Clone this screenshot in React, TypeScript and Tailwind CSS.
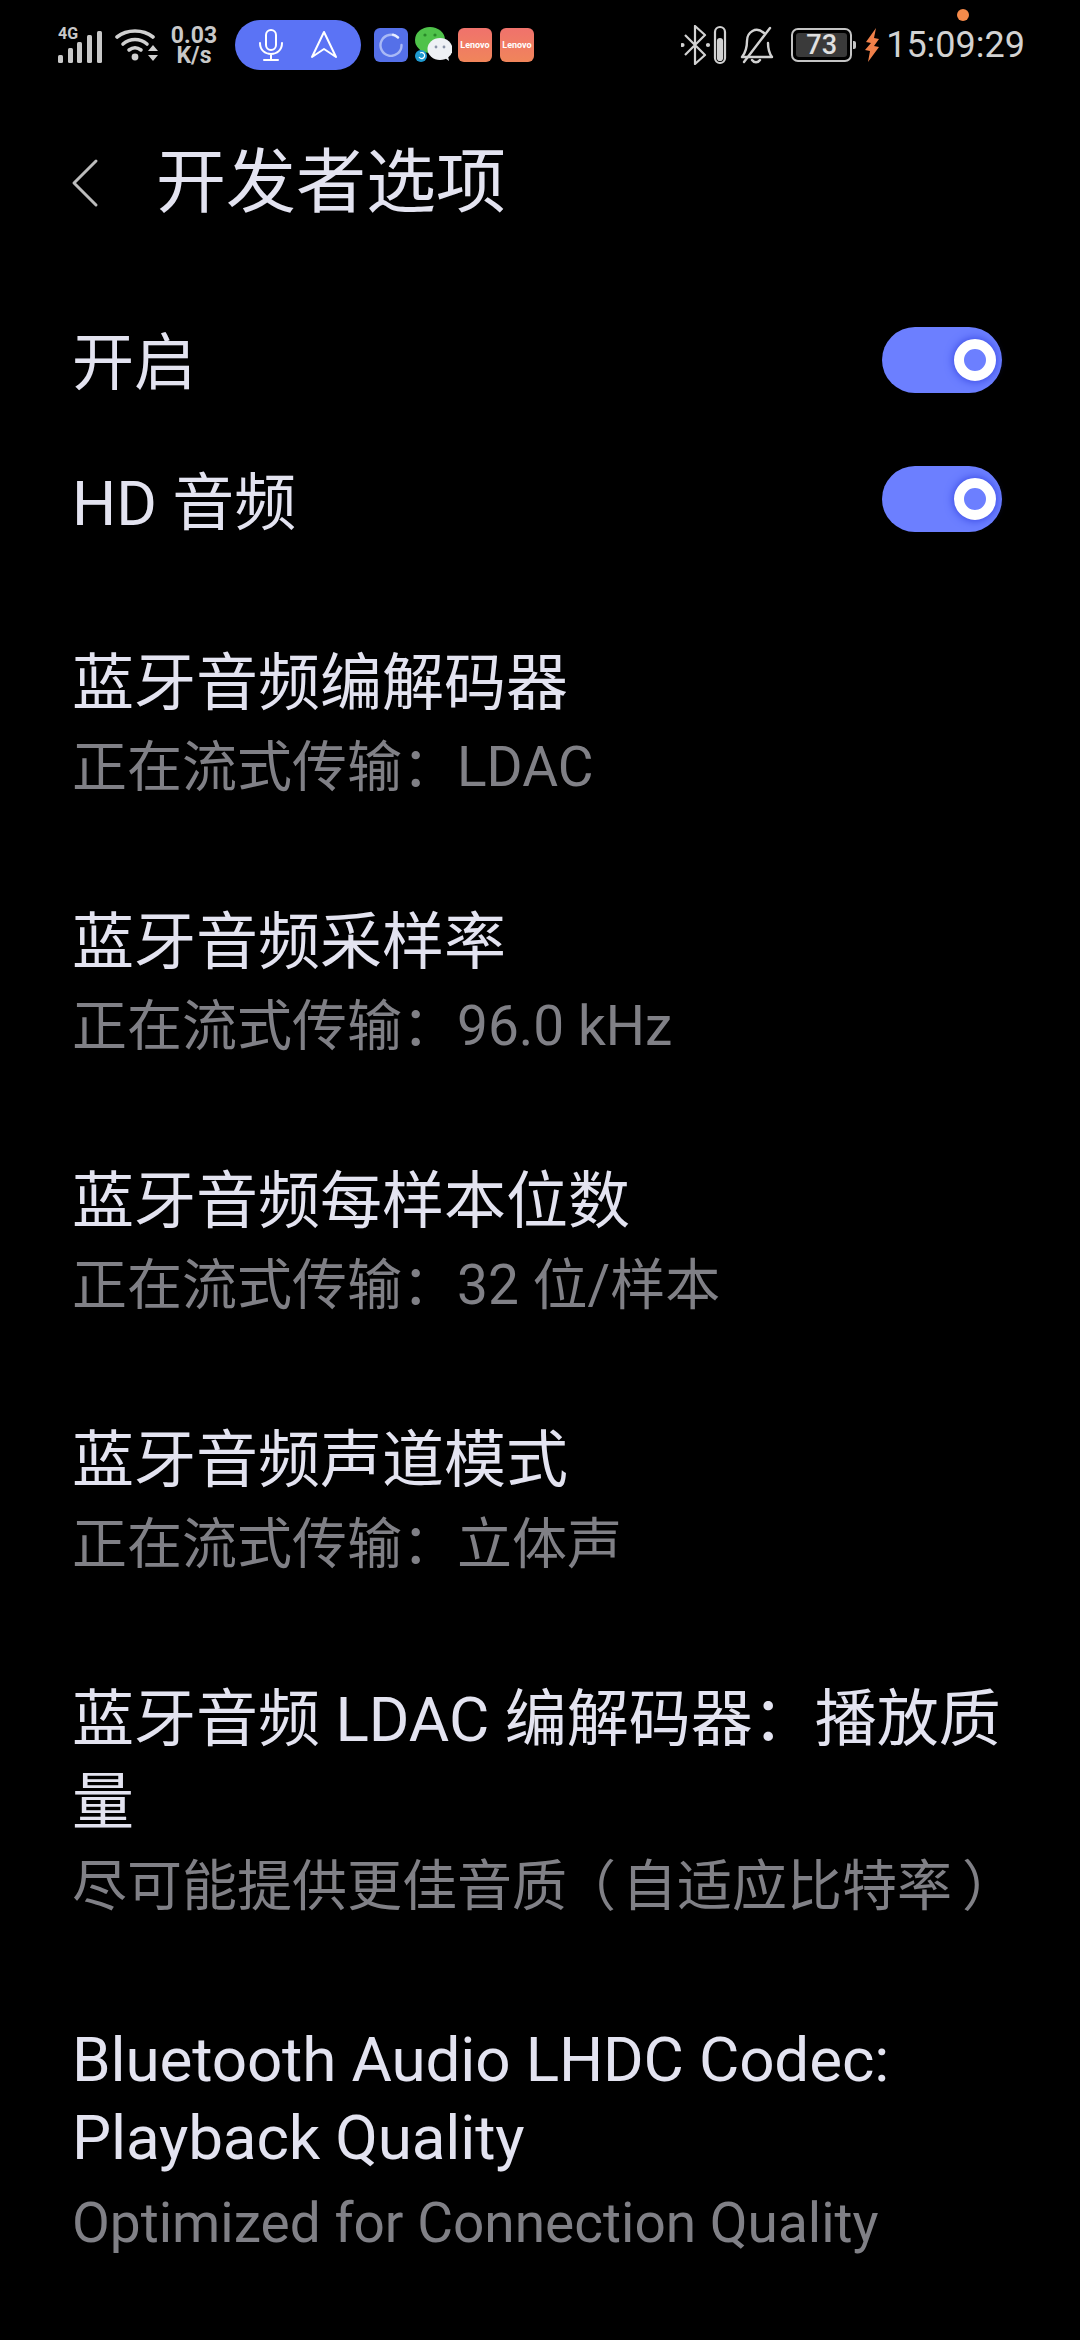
const font = { fontFamily: '"Roboto", "Noto Sans CJK SC", sans-serif' };

function Toggle({ className }: { className: string }) {
  return (
    <div className={`w-[120px] h-[66px] rounded-full bg-[#6c7fff] flex items-center justify-end pr-[6px] ${className}`}>
      <div className="w-[42px] h-[42px] rounded-full border-[10px] border-white bg-[#6c7fff] shadow-[0_0_10px_#3040e0]" />
    </div>
  );
}

function SignalIcon() {
  return (
    <svg width="46" height="40" viewBox="0 0 46 40" fill="#c8c8c8">
      <text x="0" y="14" fontSize="16" fontWeight="700" fontFamily="Roboto, sans-serif">4G</text>
      <rect x="0" y="30" width="5" height="8" rx="1.5" />
      <rect x="10" y="23" width="5" height="15" rx="1.5" />
      <rect x="19" y="17" width="5" height="21" rx="1.5" />
      <rect x="29" y="10" width="5" height="28" rx="1.5" />
      <rect x="39" y="6" width="5" height="32" rx="1.5" />
    </svg>
  );
}

function WifiIcon() {
  return (
    <svg width="46" height="34" viewBox="0 0 46 34" fill="none" stroke="#d0d0d0" strokeWidth="3.6" strokeLinecap="round">
      <path d="M2 9C12 1 28 1 38 9" />
      <path d="M8 16C15 10 25 10 32 16" />
      <path d="M14 22C18 19 22 19 26 22" />
      <circle cx="20" cy="29" r="3.4" fill="#d0d0d0" stroke="none" />
      <path d="M38 17l5 6h-10zM38 33l5-6h-10z" fill="#d0d0d0" stroke="none" />
    </svg>
  );
}

function CallPill() {
  return (
    <div className="ml-[17px] w-[126px] h-[50px] rounded-full bg-[#5b73f5] flex items-center justify-center gap-[27px]">
      <svg width="24" height="32" viewBox="0 0 24 32" fill="none" stroke="#fff" strokeWidth="2" strokeLinecap="round">
        <rect x="7" y="1" width="10" height="20" rx="5" />
        <path d="M1 14c0 7 5 11 11 11s11-4 11-11M12 25v6M5 31h14" />
      </svg>
      <svg width="28" height="30" viewBox="0 0 28 30" fill="none" stroke="#fff" strokeWidth="2" strokeLinejoin="round">
        <path d="M14 2L26 27 14 19 2 27z" />
      </svg>
    </div>
  );
}

function CircleApp() {
  return (
    <div className="ml-[13px] w-[34px] h-[34px] rounded-[6px] bg-[#5570e8] flex items-center justify-center">
      <svg width="24" height="24" viewBox="0 0 24 24" fill="none" strokeWidth="2.4" strokeLinecap="round">
        <path d="M19 4.500A10.500 10.500 0 1 0 22.500 12" stroke="#a9b9f6" />
        <path d="M14 1.700A10.500 10.500 0 0 1 19 4.500" stroke="#e8edff" />
      </svg>
    </div>
  );
}

function WechatIcon() {
  return (
    <svg className="ml-[6px]" width="38" height="36" viewBox="0 0 38 36">
      <ellipse cx="16" cy="13" rx="15" ry="13" fill="#4fc24a" />
      <circle cx="11" cy="8" r="1.600" fill="#2a8a2a" />
      <circle cx="21" cy="8" r="1.600" fill="#2a8a2a" />
      <ellipse cx="26" cy="22" rx="12.500" ry="11" fill="#eef1f5" />
      <path d="M31 31l4 3-1-5z" fill="#eef1f5" />
      <circle cx="22" cy="20" r="1.400" fill="#8a94a8" />
      <circle cx="30" cy="20" r="1.400" fill="#8a94a8" />
      <circle cx="7" cy="29" r="6" fill="#1f9ad0" />
      <path d="M5 30a3 3 0 1 0 1-4" fill="none" stroke="#fff" strokeWidth="1.200" />
    </svg>
  );
}

function LenovoApp({ className }: { className: string }) {
  return (
    <div className={`w-[34px] h-[34px] rounded-[6px] bg-gradient-to-b from-[#f0726c] to-[#f0855a] flex items-center justify-center ${className}`}>
      <span className="text-[9px] font-bold text-white leading-none">Lenovo</span>
    </div>
  );
}

function StatusBar() {
  return (
    <div className="h-[90px] relative flex items-center pl-[58px] pr-[55px] text-[#d2d2d2]">
      <SignalIcon />
      <div className="ml-[11px]"><WifiIcon /></div>
      <div className="ml-[9px] w-[48px] text-center font-bold text-[#c8c8c8] flex flex-col gap-[1px]">
        <div className="text-[23px] leading-[19px]">0.03</div>
        <div className="text-[23px] leading-[19px]">K/s</div>
      </div>
      <CallPill />
      <CircleApp />
      <WechatIcon />
      <LenovoApp className="ml-[6px]" />
      <LenovoApp className="ml-[8px]" />
      <div className="ml-auto flex items-center">
        <svg width="46" height="40" viewBox="0 0 46 40" fill="none" stroke="#d2d2d2" strokeWidth="2.200" strokeLinejoin="round">
          <path d="M4 10l20 20-10 9V1l10 9L4 30" />
          <circle cx="1.500" cy="20" r="1" fill="#d2d2d2" />
          <circle cx="27" cy="20" r="1" fill="#d2d2d2" />
          <rect x="34" y="2" width="10" height="36" rx="5" />
          <rect x="37" y="14" width="4" height="21" rx="2" fill="#d2d2d2" />
        </svg>
        <svg className="ml-[13px]" width="34" height="38" viewBox="0 0 34 38" fill="none" stroke="#d2d2d2" strokeWidth="2.400" strokeLinecap="round" strokeLinejoin="round">
          <path d="M24 7C16 0 7 6 7 15c0 7-1 11-5 16h30c-3-4-4-8-4-14" />
          <path d="M12 34c2 3 6 3 8 0M30 2L4 36" />
        </svg>
        <div className="ml-[17px] relative w-[61px] h-[34px] rounded-[7px] border-[2px] border-[#c4c4c4] flex items-center justify-center p-[3px]">
          <div className="w-full h-full rounded-[3px] bg-[#3a3a3a] text-[27px] leading-[24px] font-medium text-center text-[#e0e0e0]">73</div>
          <div className="absolute right-[-6px] top-[11px] w-[3px] h-[8px] rounded-r-[2px] bg-[#c4c4c4]" />
        </div>
        <svg className="ml-[12px]" width="16" height="34" viewBox="0 0 16 34" fill="#f0804a">
          <path d="M12 0L2 14l5 1-6 7 5 1-2 11 11-15-5-1 5-7-5-1z" />
        </svg>
        <span className="ml-[6px] text-[36px] leading-none text-[#d2d2d2]">15:09:29</span>
      </div>
      <div className="absolute right-[111px] top-[9px] w-[12px] h-[12px] rounded-full bg-[#f58a4a]" />
    </div>
  );
}

function Row({ title, children, latin }: { title: string[]; children: React.ReactNode; latin?: boolean }) {
  return (
    <div className={latin ? 'mt-[1px]' : ''}>
      {title.map((line) => (
        <div key={line} className={`text-[62px] text-[#e3e3f0] whitespace-nowrap ${latin ? 'leading-[78px] tracking-[-0.15px]' : 'leading-[83px]'}`}>{line}</div>
      ))}
      <div className={`text-[55px] leading-[84px] text-[#808086] whitespace-nowrap ${latin ? 'mt-[4px]' : ''}`}>{children}</div>
    </div>
  );
}

function ToggleRow({ title, toggleClass }: { title: string; toggleClass: string }) {
  return (
    <div className="h-[140px] flex items-center justify-between">
      <span className="text-[62px] leading-[83px] text-[#e3e3f0]">{title}</span>
      <Toggle className={toggleClass} />
    </div>
  );
}

export default function App() {
  return (
    <div className="w-[1080px] h-[2340px] bg-black overflow-hidden" style={font}>
      <StatusBar />
      <div className="mt-[2px] h-[182px] flex items-center pl-[71px]">
        <svg width="28" height="50" viewBox="0 0 28 50" fill="none" stroke="#bcbcbc" strokeWidth="3" strokeLinecap="round" strokeLinejoin="round">
          <path d="M25 3L3 25l22 22" />
        </svg>
        <h1 className="ml-[57px] text-[70px] leading-none font-normal text-[#e3e3f0]">开发者选项</h1>
      </div>
      <div className="pl-[72px] pr-[78px]">
        <div className="mt-[19px]">
          <ToggleRow title="开启" toggleClass="mb-[6px]" />
          <ToggleRow title="HD 音频" toggleClass="mb-[8px]" />
        </div>
        <div className="mt-[69px] flex flex-col gap-[92px]">
          <Row title={['蓝牙音频编解码器']}>正在流式传输：LDAC</Row>
          <Row title={['蓝牙音频采样率']}>正在流式传输：96.0 kHz</Row>
          <Row title={['蓝牙音频每样本位数']}>正在流式传输：32 位/样本</Row>
          <Row title={['蓝牙音频声道模式']}>正在流式传输：立体声</Row>
          <Row title={['蓝牙音频 LDAC 编解码器：播放质', '量']}>
            尽可能提供更佳音质<span className="inline-block w-[55px] pr-[8px] text-right [font-feature-settings:'palt']">（</span>自适应比特率<span className="inline-block w-[55px] pl-[12px] text-left [font-feature-settings:'palt']">）</span>
          </Row>
          <Row latin title={['Bluetooth Audio LHDC Codec:', 'Playback Quality']}>Optimized for Connection Quality</Row>
        </div>
      </div>
    </div>
  );
}
